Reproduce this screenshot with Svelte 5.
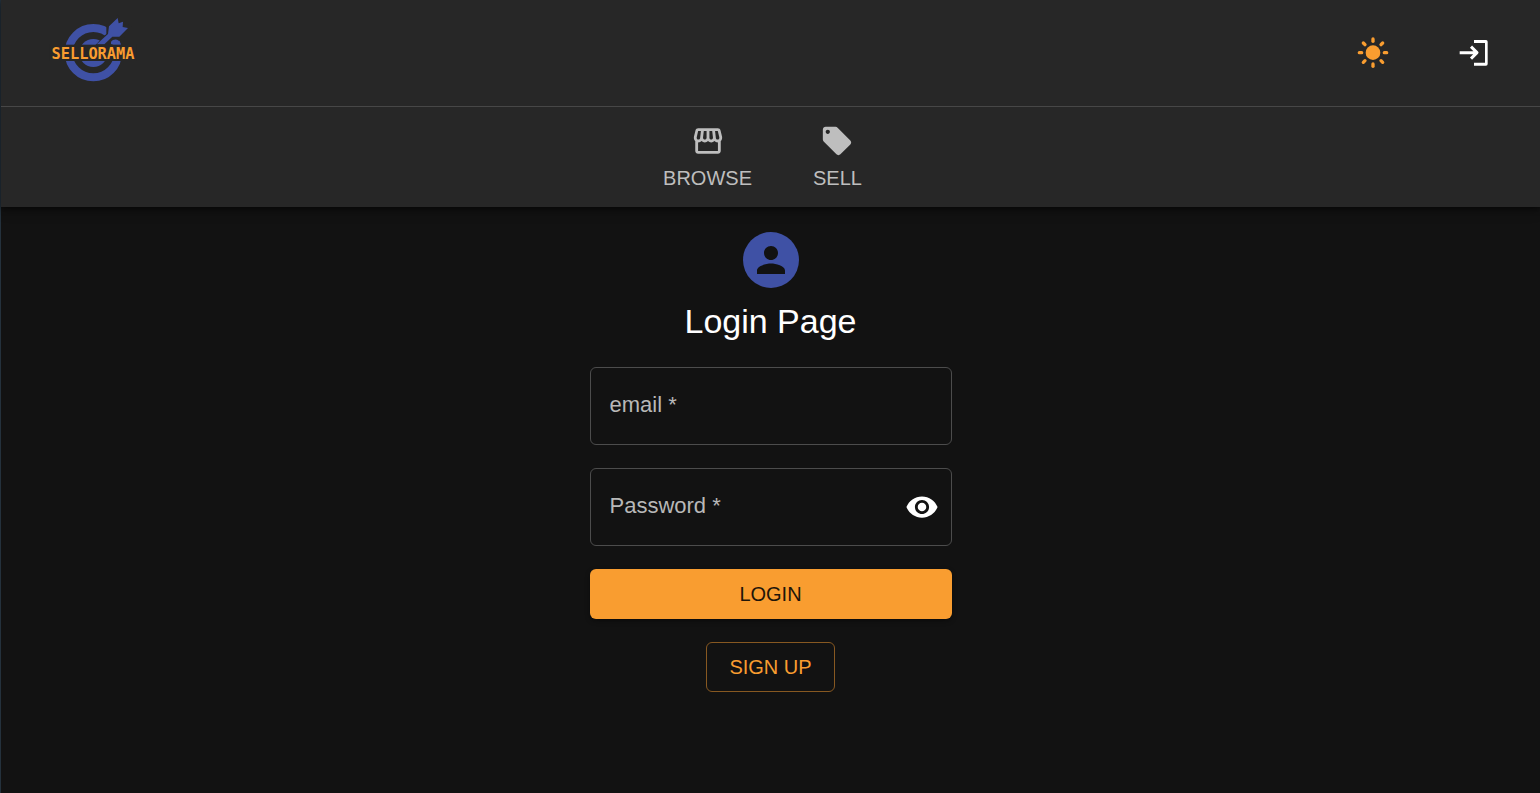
<script>
  let email = $state('');
  let password = $state('');
  let visible = $state(false);

  const rays = [0, 45, 90, 135, 180, 225, 270, 315];
</script>

<div class="page">
  <header>
    <div class="topbar">
      <a class="brand" href="#home" aria-label="Sellorama">
        <svg viewBox="0 0 315 255" class="logo">
          <circle cx="160" cy="134" r="74" class="ring" />
          <circle cx="160" cy="135" r="42" class="blue" />
          <path d="M160 118 L192 84 L199 78 L199 50 L232 20 L280 60 L250 92 L218 108 L198 124 Z" class="gap" />
          <path d="M170 109 L204 78 L207 55 L233 30 L236 46 L249 41 L248 57 L264 60 L238 86 L217 86 L193 109 Z" class="blue" />
          <path d="M213 101 Q219 93 231 95 Q238 97 242 109 L213 109 Z" class="blue" />
          <rect x="28" y="110" width="262" height="49" class="gap" />
          <text x="159" y="152" text-anchor="middle" class="wordmark">SELLORAMA</text>
        </svg>
      </a>
      <div class="actions">
        <button class="icon-button" aria-label="Toggle theme">
          <svg viewBox="0 0 102 102" class="icon sun">
            <circle cx="51" cy="50" r="22" />
            {#each rays as angle}
              <rect x="46" y="4" width="10" height="17" rx="5" transform="rotate({angle} 51 50)" />
            {/each}
          </svg>
        </button>
        <button class="icon-button" aria-label="Log in">
          <svg viewBox="0 0 102 102" class="icon enter">
            <path d="M51 12 H87 Q92 12 92 17 V84 Q92 89 87 89 H51 V80 H84 V21 H51 Z" />
            <path d="M8 50 H60 M42 32 L60 50 L42 68" class="line" />
          </svg>
        </button>
      </div>
    </div>
    <nav>
      <a href="#browse">
        <svg viewBox="0 0 24 24" class="icon"><path d="M21.900 8.890l-1.050-4.370c-.22-.9-1-1.520-1.910-1.520H5.050c-.9 0-1.690.63-1.900 1.520L2.100 8.890c-.24 1.020-.02 2.060.62 2.880.08.110.19.190.28.290V19c0 1.100.9 2 2 2h14c1.100 0 2-.9 2-2v-6.940c.09-.09.2-.18.28-.28.64-.82.87-1.870.62-2.890zm-2.990-3.900l1.050 4.370c.1.420.01.840-.25 1.170-.14.180-.44.470-.94.470-.61 0-1.140-.49-1.210-1.140L16.980 5l1.930-.01zM13 5h1.960l.54 4.520c.05.390-.07.780-.33 1.070-.22.260-.54.410-.95.410-.67 0-1.220-.59-1.220-1.310V5zM8.490 9.520L9.040 5H11v4.690c0 .72-.55 1.310-1.290 1.310-.34 0-.65-.15-.89-.41-.25-.29-.37-.68-.33-1.070zm-4.450-.16L5.050 5h1.970l-.58 4.860c-.08.650-.6 1.140-1.210 1.140-.49 0-.8-.29-.93-.47-.27-.32-.36-.75-.26-1.170zM5 19v-6.030c.08.010.15.030.23.030.87 0 1.660-.36 2.240-.95.6.6 1.400.95 2.310.95.87 0 1.650-.36 2.230-.93.59.570 1.390.93 2.290.93.84 0 1.640-.35 2.240-.95.58.590 1.370.95 2.240.95.08 0 .15-.02.23-.03V19H5z" /></svg>
        <span>BROWSE</span>
      </a>
      <a href="#sell">
        <svg viewBox="0 0 24 24" class="icon"><path d="M21.410 11.580l-9-9C12.050 2.220 11.550 2 11 2H4c-1.100 0-2 .9-2 2v7c0 .55.22 1.050.59 1.420l9 9c.36.360.86.580 1.410.58.55 0 1.050-.22 1.410-.59l7-7c.37-.36.59-.86.59-1.410 0-.55-.23-1.060-.59-1.420zM5.500 7C4.670 7 4 6.330 4 5.500S4.670 4 5.500 4 7 4.670 7 5.500 6.330 7 5.500 7z" /></svg>
        <span>SELL</span>
      </a>
    </nav>
  </header>

  <main>
    <div class="avatar">
      <svg viewBox="0 0 24 24"><path d="M12 12c2.210 0 4-1.790 4-4s-1.790-4-4-4-4 1.790-4 4 1.790 4 4 4zm0 2c-2.670 0-8 1.340-8 4v2h16v-2c0-2.660-5.330-4-8-4z" /></svg>
    </div>
    <h1>Login Page</h1>
    <form onsubmit={(event) => event.preventDefault()}>
      <div class="field">
        <label for="email" class:hidden={email}>email *</label>
        <input id="email" type="email" required bind:value={email} />
      </div>
      <div class="field">
        <label for="password" class:hidden={password}>Password *</label>
        <input id="password" type={visible ? 'text' : 'password'} required bind:value={password} />
        <button type="button" class="icon-button reveal" aria-label="Show password" onclick={() => (visible = !visible)}>
          <svg viewBox="0 0 24 24" class="icon"><path d="M12 4.500C7 4.500 2.730 7.610 1 12c1.730 4.390 6 7.500 11 7.500s9.270-3.110 11-7.500c-1.730-4.390-6-7.500-11-7.500zM12 17c-2.760 0-5-2.240-5-5s2.240-5 5-5 5 2.240 5 5-2.240 5-5 5zm0-8c-1.660 0-3 1.340-3 3s1.340 3 3 3 3-1.340 3-3-1.340-3-3-3z" /></svg>
        </button>
      </div>
      <button type="submit" class="login">LOGIN</button>
      <button type="button" class="signup">SIGN UP</button>
    </form>
  </main>
</div>

<style>
  :global(body) {
    margin: 0;
    background: #121212;
  }
  .page {
    box-sizing: border-box;
    min-height: 100vh;
    border-left: 1px solid #24313c;
    background: #121212;
    color: #fff;
    font-family: "Liberation Sans", Arial, sans-serif;
  }
  header {
    background: #272727;
    box-shadow: 0 2px 5px rgba(0, 0, 0, 0.5), 0 4px 12px rgba(0, 0, 0, 0.2);
  }
  .topbar {
    display: flex;
    align-items: center;
    justify-content: space-between;
    box-sizing: border-box;
    height: 107px;
    padding: 0 49px 0 39px;
    border-bottom: 1px solid #474747;
  }
  .brand,
  .logo {
    display: block;
  }
  .brand {
    padding-bottom: 5px;
  }
  .logo {
    width: 105px;
    height: 85px;
  }
  .ring {
    fill: none;
    stroke: #3f51a5;
    stroke-width: 24;
  }
  .blue {
    fill: #3f51a5;
  }
  .gap {
    fill: #272727;
  }
  .wordmark {
    fill: #f99d30;
    font-family: "DejaVu Sans Mono", monospace;
    font-size: 46px;
    font-weight: 700;
  }
  .actions {
    display: flex;
    gap: 67px;
  }
  .icon-button {
    display: block;
    padding: 0;
    border: 0;
    background: none;
    color: #fff;
    cursor: pointer;
  }
  .icon {
    display: block;
    width: 34px;
    height: 34px;
    fill: currentColor;
  }
  .sun {
    color: #f99d30;
  }
  .line {
    fill: none;
    stroke: currentColor;
    stroke-width: 9;
    stroke-linejoin: round;
  }
  nav {
    display: flex;
    justify-content: center;
    gap: 61px;
    padding: 17px 16px 16px 0;
  }
  nav a {
    display: flex;
    flex-direction: column;
    align-items: center;
    gap: 7px;
    color: #bebebe;
    font-size: 20px;
    line-height: 26px;
    text-decoration: none;
  }
  main {
    display: flex;
    flex-direction: column;
    align-items: center;
    padding: 25px 16px;
  }
  .avatar {
    display: grid;
    place-items: center;
    width: 56px;
    height: 56px;
    border-radius: 50%;
    background: #3f51a5;
  }
  .avatar svg {
    width: 42px;
    height: 42px;
    fill: #121212;
  }
  h1 {
    margin: 12px 0 25px;
    font-size: 34px;
    font-weight: 400;
    line-height: 42px;
  }
  form {
    display: flex;
    flex-direction: column;
    align-items: center;
    gap: 23px;
    width: 100%;
    max-width: 362px;
  }
  .field {
    display: grid;
    grid-template-columns: 1fr auto;
    align-items: center;
    box-sizing: border-box;
    width: 100%;
    height: 78px;
    border: 1px solid #4c4c4c;
    border-radius: 6px;
  }
  .field:focus-within {
    border-color: #f99d30;
  }
  .field label {
    grid-area: 1 / 1;
    padding: 0 0 2px 19px;
    color: #b8b8b8;
    font-size: 22px;
    line-height: 26px;
    pointer-events: none;
  }
  .field .hidden {
    visibility: hidden;
  }
  .field input {
    grid-area: 1 / 1;
    box-sizing: border-box;
    width: 100%;
    height: 76px;
    padding: 0 18px;
    border: 0;
    outline: 0;
    background: transparent;
    color: #fff;
    font: inherit;
    font-size: 22px;
  }
  .reveal {
    padding-right: 12px;
  }
  .login,
  .signup {
    box-sizing: border-box;
    height: 50px;
    border-radius: 6px;
    font-family: inherit;
    font-size: 20px;
    line-height: 26px;
    cursor: pointer;
  }
  .login {
    width: 100%;
    border: 0;
    background: #f99d30;
    color: #1f1509;
    box-shadow: 0 2px 5px rgba(0, 0, 0, 0.4);
  }
  .signup {
    padding: 0 22px;
    border: 1px solid #875821;
    background: transparent;
    color: #f99d30;
  }
</style>
